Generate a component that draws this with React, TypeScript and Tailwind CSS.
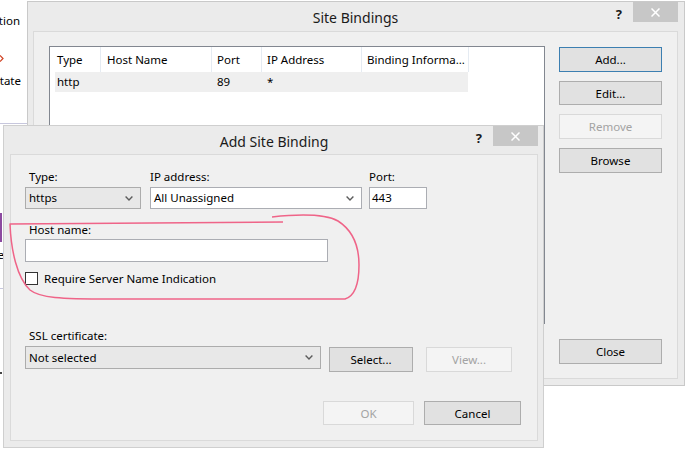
import React from "react";

function Chevron() {
  return (
    <svg width="8" height="5" viewBox="0 0 8 5" className="shrink-0">
      <path d="M0.6 0.6 L4 4 L7.4 0.6" fill="none" stroke="#5c5c5c" strokeWidth="1.4" />
    </svg>
  );
}

function CloseX() {
  return (
    <svg width="9" height="9" viewBox="0 0 9 9">
      <path d="M0.5 0.5 L8.5 8.5 M8.5 0.5 L0.5 8.5" stroke="#ffffff" strokeWidth="1.5" />
    </svg>
  );
}

type BtnProps = {
  children: React.ReactNode;
  className?: string;
  disabled?: boolean;
  primary?: boolean;
};

function Btn({ children, className = "", disabled = false, primary = false }: BtnProps) {
  const tone = disabled
    ? "border-[#d9d9d9] bg-[#f4f4f4] text-[#a3a3a3]"
    : primary
    ? "border-[#3c7fb1] bg-[#e1e1e1] text-black"
    : "border-[#adadad] bg-[#e1e1e1] text-black";
  return (
    <div className={`flex items-center justify-center border text-[11.5px] leading-[15px] ${tone} ${className}`}>
      {children}
    </div>
  );
}

function TitleBar({ title, h }: { title: string; h: string }) {
  return (
    <div className={`relative shrink-0 flex items-start justify-end ${h}`}>
      <div className="absolute inset-x-0 top-[7px] text-center text-[14px] leading-[18px] text-[#1a1a1a]">
        {title}
      </div>
      <span className="relative mt-[4px] mr-[11px] text-[13px] font-bold leading-[16px] text-[#1a1a1a]">?</span>
      <div className="relative w-[45px] h-[20px] bg-[#c7c7c7] flex items-center justify-center">
        <CloseX />
      </div>
    </div>
  );
}

function Label({ children, pl = "pl-[4px]" }: { children: React.ReactNode; pl?: string }) {
  return <div className={`${pl} h-[15px] text-[11.5px] leading-[15px] text-black`}>{children}</div>;
}

export default function App() {
  const cols = [
    { t: "Type", w: "w-[51px]", pl: "pl-[7px]" },
    { t: "Host Name", w: "w-[111px]", pl: "pl-[6px]" },
    { t: "Port", w: "w-[50px]", pl: "pl-[5px]" },
    { t: "IP Address", w: "w-[100px]", pl: "pl-[5px]" },
    { t: "Binding Informa...", w: "w-[107px]", pl: "pl-[5px]" },
  ];

  return (
    <div className="relative w-[685px] h-[451px] overflow-hidden bg-white font-['Noto_Sans',sans-serif] text-black">
      {/* window behind, at the left edge */}
      <div className="absolute left-0 top-0 w-[27px] h-[451px] bg-white">
        <div className="absolute left-0 top-[13px] w-[20px] overflow-hidden flex justify-end text-[11.5px] leading-[15px] whitespace-nowrap">
          Application
        </div>
        <svg className="absolute left-0 top-[55px]" width="4" height="7" viewBox="0 0 4 7">
          <path d="M0 0.5 L3 3.5 L0 6.5" fill="none" stroke="#d04020" strokeWidth="1.2" />
        </svg>
        <div className="absolute left-0 top-[73px] w-[21px] overflow-hidden flex justify-end text-[11.5px] leading-[15px] whitespace-nowrap">
          State
        </div>
        <div className="absolute left-0 top-[123px] w-[27px] h-px bg-[#c7c7dd]" />
        <div className="absolute left-0 top-[213px] w-[2px] h-[29px] bg-[#8c4aa0]" />
        <div className="absolute left-0 top-[247px] w-[4px] overflow-hidden flex justify-end text-[11.5px] leading-[15px]">
          e
        </div>
        <div className="absolute left-0 top-[288px] w-[4px] h-px bg-[#c7c7dd]" />
        <div className="absolute left-0 top-[372px] w-[2px] h-[2px] bg-[#444]" />
      </div>

      {/* Site Bindings window */}
      <div className="absolute left-[27px] top-[1px] w-[658px] h-[385px] border border-[#c9c9c9] bg-[#ebebeb] pl-[5px] pr-[6px] pb-[6px] flex flex-col">
        <TitleBar title="Site Bindings" h="h-[29px]" />
        <div className="flex-1 border border-[#dadada] bg-[#f0f0f0] pl-[15px] pr-[15px] pt-[14px] pb-[14px] flex gap-[14px]">
          <div className="w-[496px] h-[278px] border border-[#828790] bg-white flex flex-col">
            <div className="h-[25px] flex">
              {cols.map((c) => (
                <div
                  key={c.t}
                  className={`${c.w} ${c.pl} h-full border-r border-[#e5ebf2] flex items-center text-[11.5px] whitespace-nowrap`}
                >
                  {c.t}
                </div>
              ))}
            </div>
            <div className="ml-[5px] w-[413px] h-[20px] bg-[#efefef] flex items-center text-[11.5px]">
              <div className="w-[156px] pl-[2px]">http</div>
              <div className="w-[50px] pl-[6px]">89</div>
              <div className="pl-[6px]">*</div>
            </div>
          </div>
          <div className="w-[103px] flex flex-col">
            <div className="flex flex-col gap-[9px] mt-px">
              <Btn primary className="h-[25px]">Add...</Btn>
              <Btn className="h-[24px]">Edit...</Btn>
              <Btn disabled className="h-[25px]">Remove</Btn>
              <Btn className="h-[25px]">Browse</Btn>
            </div>
            <Btn className="h-[25px] mt-auto">Close</Btn>
          </div>
        </div>
      </div>

      {/* Add Site Binding dialog */}
      <div className="absolute left-[3px] top-[125px] w-[541px] h-[323px] border border-[#cfcfcf] bg-[#ebebeb] pl-[6px] pr-[5px] pb-[6px] flex flex-col">
        <TitleBar title="Add Site Binding" h="h-[28px]" />
        <div className="flex-1 border border-[#dadada] bg-[#f0f0f0] pl-[14px] pr-[16px] pt-[14px] flex flex-col">
          <div className="flex">
            <div className="flex flex-col">
              <Label>Type:</Label>
              <div className="mt-[3px] w-[116px] h-[22px] border border-[#acacac] bg-[#e8e8e8] flex items-center justify-between pl-[3px] pr-[7px] text-[11.5px]">
                <span>https</span>
                <Chevron />
              </div>
            </div>
            <div className="ml-[9px] flex flex-col">
              <Label pl="pl-0">IP address:</Label>
              <div className="mt-[3px] w-[212px] h-[22px] border border-[#abadb3] bg-white flex items-center justify-between pl-[3px] pr-[7px] text-[11.5px]">
                <span>All Unassigned</span>
                <Chevron />
              </div>
            </div>
            <div className="ml-[7px] flex flex-col">
              <Label pl="pl-0">Port:</Label>
              <div className="mt-[3px] w-[58px] h-[22px] border border-[#abadb3] bg-white flex items-center pl-[2px] text-[11.5px]">
                443
              </div>
            </div>
          </div>

          <div className="mt-[13px]">
            <Label>Host name:</Label>
          </div>
          <div className="mt-[2px] w-[303px] h-[23px] border border-[#abadb3] bg-white" />
          <div className="mt-[8px] h-[17px] flex items-center">
            <div className="w-[13px] h-[13px] border border-[#333333] bg-white" />
            <span className="ml-[6px] text-[11.5px] leading-[15px]">Require Server Name Indication</span>
          </div>

          <div className="mt-[41px]">
            <Label>SSL certificate:</Label>
          </div>
          <div className="mt-[3px] flex items-start">
            <div className="w-[296px] h-[23px] border border-[#acacac] bg-[#e8e8e8] flex items-center justify-between pl-[3px] pr-[7px] text-[11.5px]">
              <span>Not selected</span>
              <Chevron />
            </div>
            <Btn className="ml-[8px] mt-px w-[84px] h-[25px]">Select...</Btn>
            <Btn disabled className="ml-[13px] mt-px w-[86px] h-[25px]">View...</Btn>
          </div>

          <div className="mt-[29px] flex justify-end">
            <Btn disabled className="w-[91px] h-[24px]">OK</Btn>
            <Btn className="ml-[10px] w-[97px] h-[24px]">Cancel</Btn>
          </div>
        </div>
      </div>

      {/* hand-drawn red annotation */}
      <svg className="absolute left-0 top-0 pointer-events-none" width="685" height="451" viewBox="0 0 685 451">
        <path
          d="M283 222 L10 224 C11 250 17 278 30 290 C40 298 60 299 110 299 L345 299 C355 296 359 285 359 265 C359 245 352 230 338 221 C325 214 300 214 272 217"
          fill="none"
          stroke="#ef6488"
          strokeWidth="1.5"
          strokeLinejoin="round"
        />
      </svg>
    </div>
  );
}
